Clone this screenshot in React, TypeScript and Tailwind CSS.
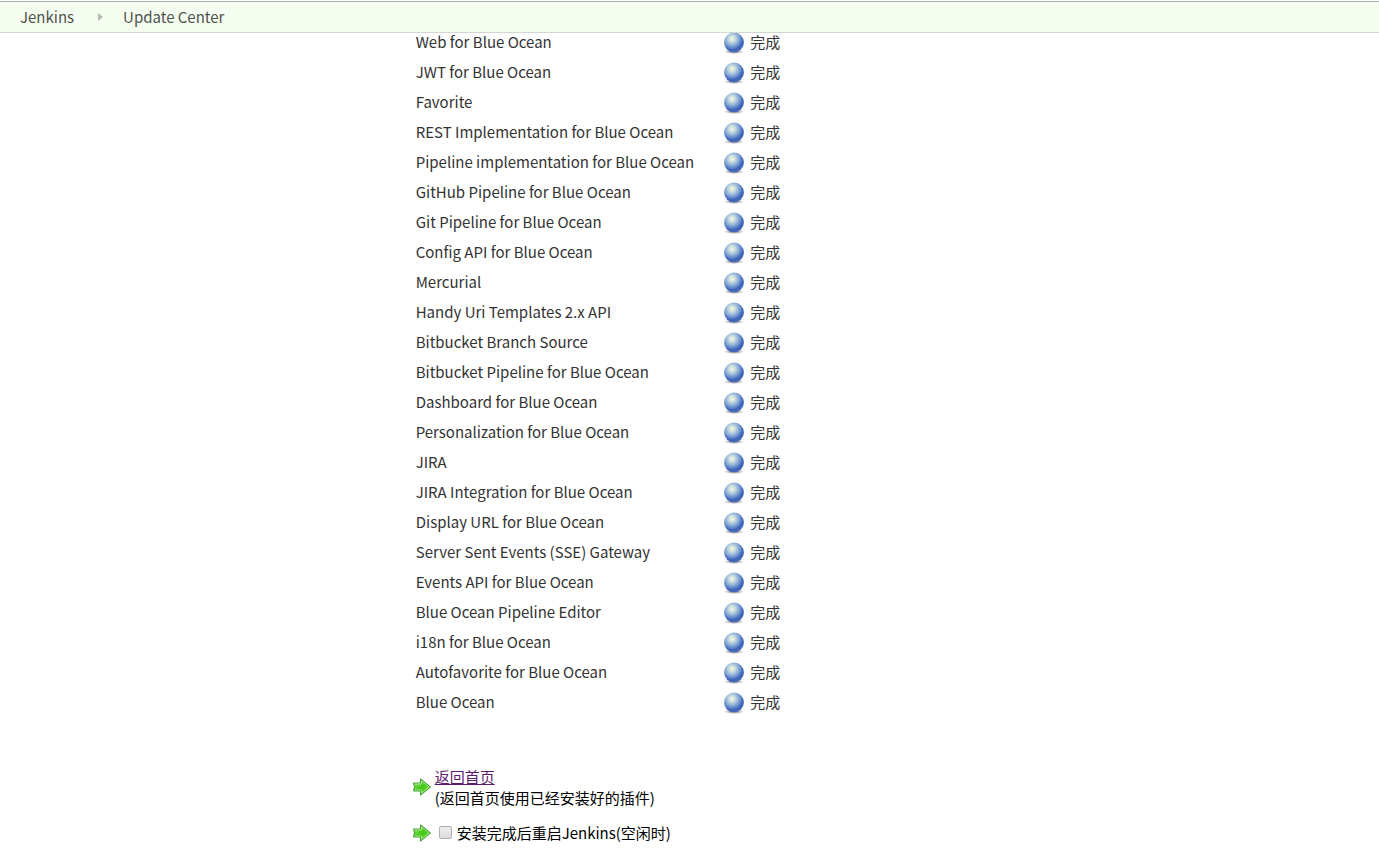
const PLUGINS = [
  'Web for Blue Ocean',
  'JWT for Blue Ocean',
  'Favorite',
  'REST Implementation for Blue Ocean',
  'Pipeline implementation for Blue Ocean',
  'GitHub Pipeline for Blue Ocean',
  'Git Pipeline for Blue Ocean',
  'Config API for Blue Ocean',
  'Mercurial',
  'Handy Uri Templates 2.x API',
  'Bitbucket Branch Source',
  'Bitbucket Pipeline for Blue Ocean',
  'Dashboard for Blue Ocean',
  'Personalization for Blue Ocean',
  'JIRA',
  'JIRA Integration for Blue Ocean',
  'Display URL for Blue Ocean',
  'Server Sent Events (SSE) Gateway',
  'Events API for Blue Ocean',
  'Blue Ocean Pipeline Editor',
  'i18n for Blue Ocean',
  'Autofavorite for Blue Ocean',
  'Blue Ocean',
];

// gradients shared by every status ball and arrow
function IconDefs() {
  return (
    <svg className="absolute h-0 w-0" aria-hidden="true">
      <defs>
        <radialGradient id="ball" cx="0.4" cy="0.32" r="0.7">
          <stop offset="0" stopColor="#f2f8dc" />
          <stop offset="0.2" stopColor="#cfe0de" />
          <stop offset="0.5" stopColor="#86a9d8" />
          <stop offset="0.8" stopColor="#3c62b8" />
          <stop offset="1" stopColor="#4a6fba" />
        </radialGradient>
        <radialGradient id="ball-shadow">
          <stop offset="0" stopColor="#000" stopOpacity="0.6" />
          <stop offset="1" stopColor="#000" stopOpacity="0" />
        </radialGradient>
        <linearGradient id="arrow" x1="0" y1="0" x2="1" y2="1">
          <stop offset="0" stopColor="#a4e880" />
          <stop offset="0.5" stopColor="#3fc814" />
          <stop offset="1" stopColor="#7ce050" />
        </linearGradient>
      </defs>
    </svg>
  );
}

function Ball() {
  return (
    <svg viewBox="0 0 24 24" className="h-6 w-6 shrink-0" aria-hidden="true">
      <ellipse cx="12" cy="21.6" rx="10" ry="2.4" fill="url(#ball-shadow)" />
      <circle cx="12" cy="12.4" r="9.9" fill="url(#ball)" />
    </svg>
  );
}

function Arrow() {
  return (
    <svg viewBox="0 0 20 20" className="h-5 w-5 shrink-0" aria-hidden="true">
      <path d="M1.5 6H8.5V1.8L18.6 10L8.5 18.2V14H1.5L2.5 10Z" fill="url(#arrow)" stroke="#489a3a" strokeLinejoin="round" />
      <path d="M2.6 7H9.5V4L16.9 10L9.5 16V13H2.8" fill="none" stroke="#c4f2a8" strokeOpacity="0.7" />
    </svg>
  );
}

export default function App() {
  return (
    <div className="bg-white pt-px font-['Noto_Sans_CJK_SC',sans-serif] text-[15px] leading-5 text-[#333]">
      <IconDefs />
      <header className="relative z-10 border-y border-t-[#aaaeaa] border-b-[#d3d7cf] bg-[#f5fdf1] px-5">
        <nav aria-label="Breadcrumb" className="flex h-[30px] items-center text-[#4f534d]">
          <a href="#jenkins">Jenkins</a>
          <svg viewBox="0 0 5 8" className="mr-5 ml-6 h-2 w-[5px]" aria-hidden="true">
            <path d="M0 0L5 4L0 8Z" fill="#b5b9b2" />
          </svg>
          <a href="#update-center">Update Center</a>
        </nav>
      </header>

      <main className="-mt-1.5 ml-[calc(30%-2px)]">
        <table className="border-collapse">
          <tbody>
            {PLUGINS.map(name => (
              <tr key={name} className="h-[30px]">
                <td className="py-0 pr-7 pl-1 whitespace-nowrap">{name}</td>
                <td className="p-0">
                  <div className="flex h-[30px] items-center gap-1">
                    <Ball />
                    <span className="whitespace-nowrap">完成</span>
                  </div>
                </td>
              </tr>
            ))}
          </tbody>
        </table>

        <div className="mt-[49px] flex items-center gap-[3px] leading-[21px] text-black">
          <Arrow />
          <div>
            <a href="#home" className="text-[#5c1a6b] underline">返回首页</a>
            <div>(返回首页使用已经安装好的插件)</div>
          </div>
        </div>
        <div className="mt-3.5 flex items-center pb-2 leading-[21px] text-black">
          <Arrow />
          <input id="restart" type="checkbox" className="mr-[5px] ml-[7px] h-[13px] w-[13px] appearance-none rounded-xs border border-[#b0b0b0] bg-linear-to-b from-[#eee] to-[#dcdcdc] checked:bg-[#888]" />
          <label htmlFor="restart">安装完成后重启Jenkins(空闲时)</label>
        </div>
      </main>
    </div>
  );
}
